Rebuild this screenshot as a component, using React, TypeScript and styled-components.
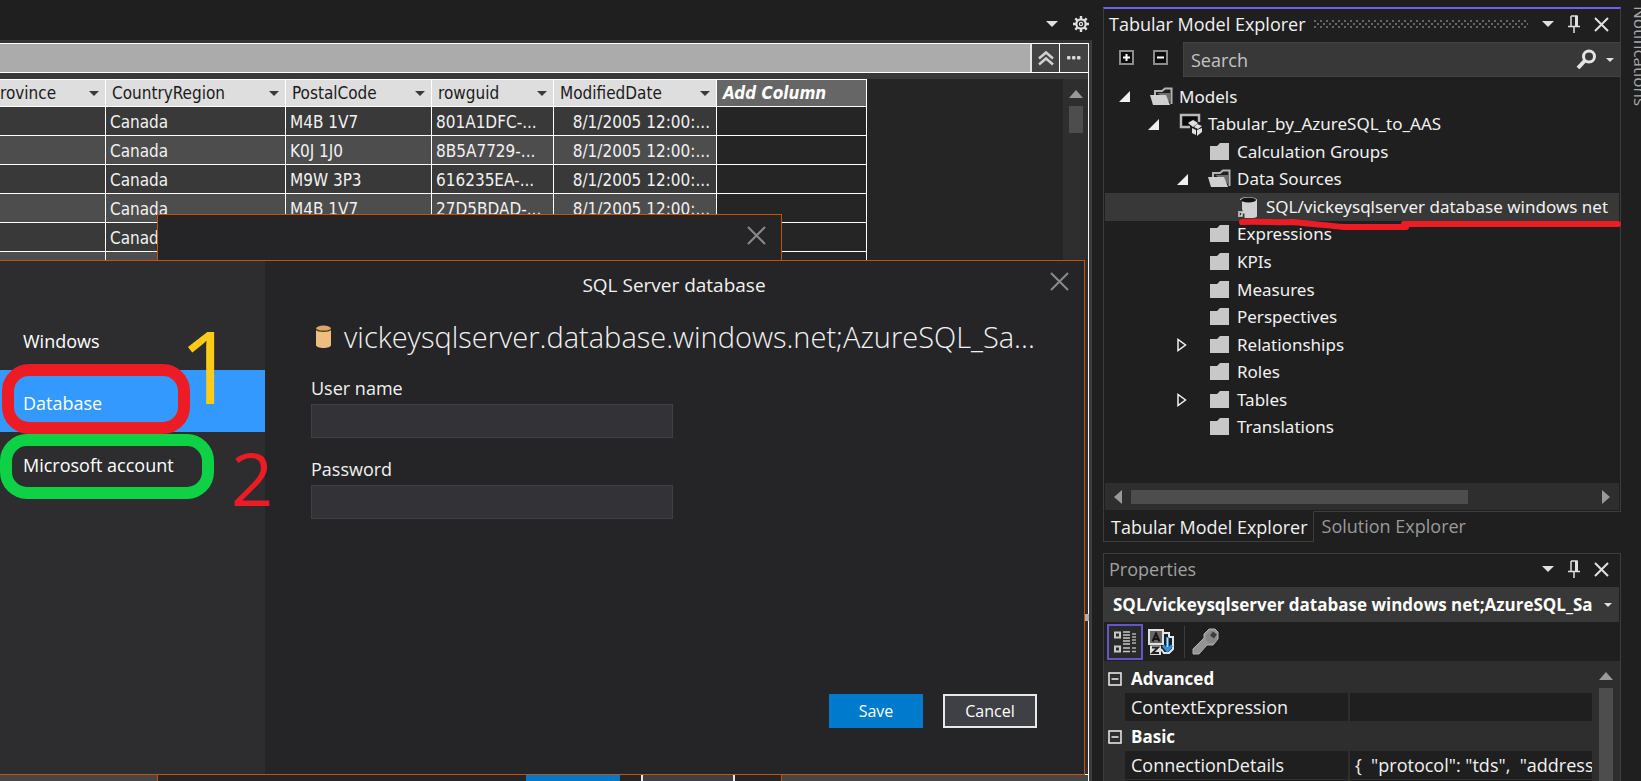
import React from "react";
import styled, { createGlobalStyle, css } from "styled-components";

const ui = `"Open Sans", "Noto Sans", sans-serif`;
const treeFont = `"Noto Sans", "Open Sans", sans-serif`;
const gridFont = `"DejaVu Sans Condensed", "Noto Sans", sans-serif`;

const GlobalStyle = createGlobalStyle`
  *, *::before, *::after { box-sizing: border-box; }
  body { margin: 0; background: #1f1f1f; color: #f1f1f1; font-family: ${ui}; font-size: 17px; line-height: 24px; }
  button, input, select { font: inherit; color: inherit; margin: 0; padding: 0; }
  button { border: 0; background: none; cursor: pointer; }
  svg { display: block; }
`;

const Shell = styled.div`
  display: flex;
  height: 100vh;
  overflow: hidden;
`;

/* ---------- editor ---------- */

const Editor = styled.main`
  flex: 1;
  min-width: 0;
  display: flex;
  flex-direction: column;
  position: relative;
`;

const TabStrip = styled.div`
  height: 40px;
  flex: none;
  display: flex;
  justify-content: flex-end;
  align-items: center;
  gap: 15px;
  padding: 7px 3px 0 0;
`;

const DocumentFrame = styled.div`
  flex: 1;
  min-height: 0;
  display: flex;
  flex-direction: column;
  background: #252525;
  border-top: 3px solid #333;
  border-right: 3px solid #3c3c3c;
`;

const DocumentInner = styled.div`
  flex: 1;
  min-height: 0;
  display: flex;
  flex-direction: column;
  border-right: 1px solid #f4f4f4;
`;

const FormulaBar = styled.div`
  height: 30px;
  flex: none;
  display: flex;
  border-top: 1px solid #fff;
  border-bottom: 1px solid #fff;
`;

const FormulaInput = styled.input`
  flex: 1;
  min-width: 0;
  border: 0;
  border-right: 2px solid #e4e4e4;
  background: #ababab;
  padding: 0 8px;
`;

const FormulaButton = styled.button`
  width: 27px;
  flex: none;
  display: grid;
  place-items: center;
  background: #424242;
  & + & { border-left: 1px solid #fff; width: 29px; }
`;

const GridArea = styled.div`
  flex: 1;
  min-height: 0;
  display: flex;
  justify-content: space-between;
  border-top: 6px solid #383838;
  overflow: hidden;
`;

const DataTable = styled.table`
  align-self: flex-start;
  table-layout: fixed;
  width: 867px;
  border-collapse: separate;
  border-spacing: 0;
  border-top: 1px solid #fff;
  font-family: ${gridFont};
  font-size: 17px;
  line-height: 22px;
`;

const HeadCell = styled.th<{ $first?: boolean; $add?: boolean }>`
  height: 27px;
  padding: 0 6px 0 ${(p) => (p.$first ? 0 : 6)}px;
  background: ${(p) => (p.$add ? "#666" : "#dedede")};
  color: ${(p) => (p.$add ? "#fff" : "#1b1b1b")};
  font-weight: ${(p) => (p.$add ? 700 : 400)};
  font-style: ${(p) => (p.$add ? "italic" : "normal")};
  border-right: 1px solid #fff;
  border-bottom: 1px solid #fff;
  text-align: left;
  white-space: nowrap;
`;

const HeadContent = styled.div`
  display: flex;
  align-items: center;
  justify-content: space-between;
`;

const BodyRow = styled.tr`
  td { background: #393939; }
  &:nth-child(even) td { background: #4d4d4d; }
  td:last-child, &:nth-child(even) td:last-child { background: #252525; }
`;

const Cell = styled.td<{ $right?: boolean }>`
  height: 29px;
  padding: 2px 6px 0 4px;
  border-right: 1px solid #fff;
  border-bottom: 1px solid #fff;
  text-align: ${(p) => (p.$right ? "right" : "left")};
  white-space: nowrap;
  overflow: hidden;
`;

const VScroll = styled.div<{ $width: number }>`
  width: ${(p) => p.$width}px;
  flex: none;
  display: flex;
  flex-direction: column;
  align-items: center;
  gap: 8px;
  padding-top: 11px;
  background: #2e2e2e;
`;

const VThumb = styled.div<{ $fill?: boolean }>`
  width: 14px;
  height: 27px;
  background: #4d4d4d;
  ${(p) => p.$fill && css`flex: 1;`}
`;

const Footer = styled.div`
  height: 7px;
  flex: none;
  background: #464646;
  border-top: 1px solid #fff;
`;

const SplitterNub = styled.div`
  position: absolute;
  right: 3px;
  bottom: 160px;
  width: 5px;
  height: 7px;
  background: #b0b0b0;
`;

/* ---------- dialogs ---------- */

const BackDialog = styled.section`
  position: absolute;
  left: 157px;
  top: 214px;
  bottom: 0;
  width: 625px;
  display: flex;
  flex-direction: column;
  align-items: flex-end;
  justify-content: space-between;
  padding: 11px 15px 0 0;
  background: #252527;
  border: 1px solid #ca5100;
  border-bottom: 0;
`;

const BackActions = styled.div`
  display: flex;
  gap: 21px;
  padding-right: 31px;
  height: 8px;
  overflow: hidden;
`;

const Dialog = styled.section`
  position: absolute;
  left: 0;
  right: 7px;
  top: 260px;
  bottom: 6px;
  display: flex;
  background: #252527;
  border: 1px solid #ca5100;
  border-left: 0;
`;

const DialogNav = styled.nav`
  width: 265px;
  flex: none;
  display: flex;
  flex-direction: column;
  padding-top: 47px;
  background: #2d2d30;
`;

const NavItem = styled.button<{ $active?: boolean }>`
  height: 62px;
  padding: 3px 0 0 23px;
  text-align: left;
  font-size: 18px;
  color: #fff;
  background: ${(p) => (p.$active ? "#3399ff" : "transparent")};
`;

const DialogBody = styled.form`
  flex: 1;
  min-width: 0;
  display: flex;
  flex-direction: column;
  padding: 11px 14px 46px 46px;
`;

const DialogHeader = styled.header`
  display: grid;
  grid-template-columns: 1fr auto 1fr;
  align-items: start;
  margin-right: 1px;
  & > :first-child { grid-column: 2; padding-right: 32px; }
  & > :last-child { justify-self: end; }
`;

const Caption = styled.h1`
  margin: 0;
  font-size: 19px;
  font-weight: 400;
  line-height: 26px;
`;

const ServerLine = styled.div`
  display: flex;
  align-items: center;
  gap: 13px;
  margin: 19px 0;
  padding-left: 5px;
`;

const ServerName = styled.h2`
  margin: 0;
  font-size: 29px;
  font-weight: 300;
  line-height: 40px;
  white-space: nowrap;
`;

const Label = styled.label`
  height: 24px;
  margin-bottom: 4px;
  font-size: 18px;
`;

const TextField = styled.input`
  width: 362px;
  height: 34px;
  margin-bottom: 19px;
  padding: 0 8px;
  background: #333337;
  border: 1px solid #3f3f46;
`;

const Actions = styled.div`
  display: flex;
  justify-content: flex-end;
  gap: 20px;
  margin-top: auto;
  padding-right: 33px;
`;

const ActionButton = styled.button<{ $primary?: boolean }>`
  width: 94px;
  height: 34px;
  font-size: 16px;
  color: #fff;
  background: ${(p) => (p.$primary ? "#007acc" : "#3f3f46")};
  ${(p) => !p.$primary && css`border: 2px solid #e8e8e8;`}
`;

const MarkerRing = styled.div<{ $x: number; $y: number; $w: number; $h: number; $color: string }>`
  position: absolute;
  left: ${(p) => p.$x}px;
  top: ${(p) => p.$y}px;
  width: ${(p) => p.$w}px;
  height: ${(p) => p.$h}px;
  border: 12px solid ${(p) => p.$color};
  border-radius: 27px;
  pointer-events: none;
`;

const MarkerDigit = styled.span<{ $x: number; $y: number; $size: number; $color: string }>`
  position: absolute;
  left: ${(p) => p.$x}px;
  top: ${(p) => p.$y}px;
  font-size: ${(p) => p.$size}px;
  line-height: 1;
  color: ${(p) => p.$color};
  pointer-events: none;
`;

/* ---------- dock ---------- */

const Dock = styled.aside`
  width: 518px;
  flex: none;
  display: flex;
  flex-direction: column;
  margin-left: 11px;
  padding-top: 7px;
`;

const ToolPanel = styled.section<{ $active?: boolean; $fill?: boolean }>`
  display: flex;
  flex-direction: column;
  position: relative;
  border: 1px solid #3d3d3d;
  ${(p) => p.$active && css`border-top: 2px solid #7160e8;`}
  ${(p) => p.$fill && css`flex: 1; min-height: 0; border-bottom: 0;`}
`;

const PanelHeader = styled.header`
  height: 33px;
  flex: none;
  display: flex;
  align-items: center;
  padding: 0 11px 3px 5px;
`;

const PanelTitle = styled.h2<{ $dim?: boolean }>`
  margin: 0 auto 0 0;
  font-size: 18px;
  font-weight: 400;
  line-height: 24px;
  white-space: nowrap;
  color: ${(p) => (p.$dim ? "#a0a0a0" : "#f1f1f1")};
`;

const Grip = styled.div`
  flex: 1;
  height: 8px;
  margin: 0 14px 0 8px;
  background:
    radial-gradient(circle at 1px 1px, #666 1px, transparent 1px) 0 0 / 6px 6px,
    radial-gradient(circle at 1px 1px, #666 1px, transparent 1px) 3px 3px / 6px 6px;
`;

const PanelControls = styled.div`
  display: flex;
  align-items: center;
  gap: 14px;
`;

const SearchRow = styled.div`
  height: 35px;
  flex: none;
  display: flex;
`;

const SearchTools = styled.div`
  width: 79px;
  display: flex;
  align-items: center;
  gap: 19px;
  padding: 0 0 4px 15px;
`;

const SearchBox = styled.label`
  flex: 1;
  min-width: 0;
  display: flex;
  align-items: center;
  gap: 9px;
  padding: 0 6px 0 7px;
  background: #383838;
  border: 1px solid #424242;
  border-right: 0;
`;

const SearchInput = styled.input`
  flex: 1;
  min-width: 0;
  border: 0;
  background: none;
  font-size: 18px;
  &::placeholder { color: #c4c4c4; opacity: 1; }
`;

const Tree = styled.ul`
  list-style: none;
  margin: 6px 1px 0;
  padding: 0;
  height: 358px;
  display: grid;
  grid-auto-rows: 1fr;
`;

const TreeItem = styled.li<{ $level: number; $selected?: boolean }>`
  display: flex;
  align-items: center;
  min-height: 0;
  min-width: 0;
  padding-left: ${(p) => 11 + p.$level * 29}px;
  font-family: ${treeFont};
  font-size: 17px;
  white-space: nowrap;
  overflow: hidden;
  background: ${(p) => (p.$selected ? "#383838" : "transparent")};
`;

const Toggle = styled.button`
  width: 16px;
  height: 16px;
  flex: none;
  display: grid;
  place-items: center;
`;

const Twisty = styled.span`
  width: 16px;
  flex: none;
`;

const NodeIcon = styled.span`
  width: 24px;
  flex: none;
  margin: 0 5px 0 18px;
`;

const HScroll = styled.div`
  height: 27px;
  flex: none;
  display: flex;
  align-items: center;
  gap: 9px;
  margin: 42px 1px 1px;
  padding: 0 9px;
  background: #2e2e2e;
`;

const HTrack = styled.div`
  flex: 1;
  height: 14px;
`;

const HThumb = styled.div`
  width: 73%;
  height: 14px;
  background: #4d4d4d;
`;

const DockTabs = styled.div`
  display: flex;
  height: 30px;
  flex: none;
  margin-bottom: 11px;
`;

const DockTab = styled.button<{ $active?: boolean }>`
  padding: 0 8px 2px;
  font-size: 18px;
  color: ${(p) => (p.$active ? "#f1f1f1" : "#9a9a9a")};
  white-space: nowrap;
  position: relative;
  ${(p) =>
    p.$active &&
    css`
      padding: 0 5px 0 7px;
      margin-top: -1px;
      background: #1f1f1f;
      border: 1px solid #3d3d3d;
      border-top-color: #1f1f1f;
    `}
`;

const ObjectPicker = styled.div`
  height: 35px;
  flex: none;
  display: flex;
  align-items: center;
  margin-right: 1px;
  padding-right: 7px;
  background: #383838;
`;

const ObjectSelect = styled.select`
  flex: 1;
  min-width: 0;
  height: 34px;
  margin-right: 11px;
  padding-left: 9px;
  appearance: none;
  border: 0;
  background: none;
  font-size: 17px;
  font-weight: 700;
  color: #fff;
  text-overflow: clip;
`;

const PropertyToolbar = styled.div`
  height: 39px;
  flex: none;
  display: flex;
  align-items: center;
  padding-left: 3px;
`;

const ViewButton = styled.button<{ $active?: boolean }>`
  width: 36px;
  height: 36px;
  display: grid;
  place-items: center;
  border: ${(p) => (p.$active ? "2px solid #6456c8" : "0")};
  background: ${(p) => (p.$active ? "#2a2a2a" : "transparent")};
`;

const Separator = styled.span`
  width: 1px;
  height: 32px;
  margin: 0 2px 0 5px;
  background: #3d3d3d;
`;

const PropertyArea = styled.div`
  flex: 1;
  min-height: 0;
  display: flex;
  overflow: hidden;
  background: #2e2e2e;
`;

const PropertyTable = styled.table`
  flex: 1;
  min-width: 0;
  align-self: flex-start;
  display: table;
  width: 100%;
  table-layout: fixed;
  border-collapse: separate;
  border-spacing: 0;
  margin-top: 3px;
  font-size: 18px;
`;

const Category = styled.th`
  height: 29px;
  padding: 0 0 0 4px;
  text-align: left;
  font-size: 17px;
  font-weight: 700;
  color: #fff;
`;

const CategoryContent = styled.div`
  display: flex;
  align-items: center;
  gap: 9px;
`;

const Gutter = styled.td`
  background: #2e2e2e;
`;

const PropCell = styled.td<{ $value?: boolean }>`
  height: 29px;
  padding: 0 0 0 ${(p) => (p.$value ? 5 : 6)}px;
  background: #1f1f1f;
  border-bottom: 1px solid #2e2e2e;
  border-left: ${(p) => (p.$value ? "2px solid #2e2e2e" : "0")};
  white-space: pre;
  overflow: hidden;
`;

const AutoHide = styled.aside`
  width: 20px;
  flex: none;
  padding: 6px 0 0 7px;
  overflow: hidden;
`;

const AutoHideTab = styled.button`
  writing-mode: vertical-rl;
  font-size: 17px;
  line-height: 24px;
  color: #a8a8a8;
  white-space: nowrap;
`;

/* ---------- icons ---------- */

const Caret = ({ w = 12, color = "#e0e0e0" }: { w?: number; color?: string }) => (
  <svg width={w} height={w / 2} viewBox="0 0 12 6"><path d="M0 0h12L6 6z" fill={color} /></svg>
);
const UpArrow = () => (
  <svg width="14" height="8" viewBox="0 0 14 8"><path d="M0 8h14L7 0z" fill="#999" /></svg>
);
const SideArrow = ({ right }: { right?: boolean }) => (
  <svg width="8" height="14" viewBox="0 0 8 14"><path d={right ? "M0 0v14l8-7z" : "M8 0v14L0 7z"} fill="#999" /></svg>
);
const Gear = () => (
  <svg width="16" height="16" viewBox="0 0 16 16" fill="none" stroke="#e0e0e0">
    <circle cx="8" cy="8" r="4.7" strokeWidth="2.2" />
    <circle cx="8" cy="8" r="1.6" strokeWidth="1.2" />
    <path d="M8 0v3M8 13v3M0 8h3M13 8h3M2.3 2.3l2 2M11.7 11.7l2 2M13.7 2.3l-2 2M4.3 11.7l-2 2" strokeWidth="2.4" />
  </svg>
);
const Cross = ({ size = 15, color = "#e0e0e0", width = 2 }: { size?: number; color?: string; width?: number }) => (
  <svg width={size} height={size} viewBox={`0 0 ${size} ${size}`}>
    <path d={`M1 1L${size - 1} ${size - 1}M${size - 1} 1L1 ${size - 1}`} stroke={color} strokeWidth={width} />
  </svg>
);
const Pin = () => (
  <svg width="12" height="18" viewBox="0 0 12 18" fill="none" stroke="#e0e0e0">
    <path d="M3 1h6v10M3 1v10M0 11.500h12M6 12v6" strokeWidth="1.500" />
    <path d="M8.500 1v10" strokeWidth="3" />
  </svg>
);
const ChevronsUp = () => (
  <svg width="16" height="16" viewBox="0 0 16 16" fill="none" stroke="#d0d0d0" strokeWidth="2.500">
    <path d="M1 8.500l7-6 7 6M1 14.500l7-6 7 6" />
  </svg>
);
const Dots = () => (
  <svg width="14" height="4" viewBox="0 0 14 4" fill="#d8d8d8">
    <rect width="3.500" height="3.500" rx="1" /><rect x="5" width="3.500" height="3.500" rx="1" /><rect x="10" width="3.500" height="3.500" rx="1" />
  </svg>
);
const BoxSign = ({ plus }: { plus?: boolean }) => (
  <svg width="15" height="15" viewBox="0 0 15 15" fill="#0c0c0c">
    <rect x="1" y="1" width="13" height="13" stroke="#8c8c8c" strokeWidth="2" />
    <path d={plus ? "M4 7.500h7M7.500 4v7" : "M4 7.500h7"} stroke="#fff" strokeWidth="2" />
  </svg>
);
const CategoryBox = () => (
  <svg width="14" height="14" viewBox="0 0 14 14" fill="none" stroke="#f1f1f1">
    <rect x="1" y="1" width="12" height="12" strokeWidth="1.500" /><path d="M3.500 7h7" strokeWidth="1.500" />
  </svg>
);
const Magnifier = () => (
  <svg width="21" height="21" viewBox="0 0 21 21" fill="none" stroke="#e4e4e4">
    <circle cx="13" cy="7.500" r="5.500" strokeWidth="3" /><path d="M9 11.500L2 19" strokeWidth="4" />
  </svg>
);
const Expanded = () => (
  <svg width="11" height="11" viewBox="0 0 11 11"><path d="M11 0v11H0z" fill="#f0f0f0" /></svg>
);
const Collapsed = () => (
  <svg width="10" height="14" viewBox="0 0 10 14"><path d="M1 1.500v11L8.500 7z" fill="none" stroke="#f0f0f0" strokeWidth="1.500" /></svg>
);
const FolderIcon = () => (
  <svg width="24" height="20" viewBox="0 0 24 20"><path d="M2 4h7l3-3h9v17H2z" fill="#c8c8c8" /></svg>
);
const FolderOpenIcon = () => (
  <svg width="24" height="20" viewBox="0 0 24 20">
    <path d="M5 8V4h7l3-2.500h6.500V17" fill="none" stroke="#b4b4b4" strokeWidth="2" />
    <path d="M7 6h13v9z" fill="#6e6e6e" />
    <path d="M0 8h16l4 10H3z" fill="#d0d0d0" />
  </svg>
);
const ModelIcon = () => (
  <svg width="24" height="24" viewBox="0 0 24 24">
    <path d="M11 15H2V3h18v7" fill="#080808" stroke="#b8b8b8" strokeWidth="2.500" />
    <path d="M9 10l6-3 8 5-1 5-7 6-2-8z" fill="#1f1f1f" />
    <path d="M9 11l5-3 5 3-5 4z M18 12l5 2-4 3-4-2z M13 16l4 2v5l-4-2z M23 16v4l-5 4v-6z" fill="#e0e0e0" />
  </svg>
);
const DatabaseIcon = () => (
  <svg width="24" height="24" viewBox="0 0 24 24">
    <path d="M3 5c0-2 4-3 8-3s9 1 9 3v16c0 2-4 2-8 2s-7 0-7-2V5z" fill="#d0d0d0" />
    <ellipse cx="11.500" cy="5" rx="7.500" ry="2.500" fill="#141414" />
    <path d="M0 16h4v2H2v2h4v3H1" fill="none" stroke="#383838" strokeWidth="3" />
    <path d="M1 21h4v-4H1M1 19h2" fill="none" stroke="#d8d8d8" strokeWidth="1.500" />
  </svg>
);
const CylinderIcon = () => (
  <svg width="15" height="24" viewBox="0 0 15 24">
    <path d="M0 5h15v15c0 4-15 4-15 0z" fill="#eebd80" />
    <ellipse cx="7.500" cy="3.500" rx="7.500" ry="3" fill="#dba766" />
    <path d="M0 4c1 3 14 3 15 0" fill="none" stroke="#5a3f20" strokeWidth="1.500" />
  </svg>
);
const CategorizedIcon = () => (
  <svg width="22" height="22" viewBox="0 0 22 22" fill="none">
    <path d="M1 1.500h5v5H1zM1 15.500h5v5H1z" stroke="#c8c8c8" strokeWidth="2" />
    <path d="M9 1h7M9 4h7M9 7h7M9 10h7M9 13h7M9 17h7M9 20.500h7" stroke="#c8c8c8" strokeWidth="1.500" />
    <path d="M18 3h4M18 6h4M18 9h4M18 12h4M18 17h4M18 20.500h4" stroke="#b0b0b0" strokeWidth="1.500" />
  </svg>
);
const SortIcon = () => (
  <svg width="26" height="26" viewBox="0 0 26 26" fill="none">
    <path d="M1 1h14v14H1z" fill="#666" stroke="#e0e0e0" strokeWidth="2" />
    <path d="M4.500 12.500L8 4.500l3.500 8M6 10h4" stroke="#161616" strokeWidth="2" />
    <path d="M2 16.500h11V26H2z" fill="#e0e0e0" />
    <path d="M4 18.500h6L4.500 24H11" stroke="#222" strokeWidth="2" />
    <path d="M16 4h5v4h4v12l-4 4h-5l-3-4" stroke="#e8e8e8" strokeWidth="2" />
    <path d="M19.500 8v13M15 16.500l4.500 5 4.500-5" stroke="#2f8fe0" strokeWidth="3" />
    <path d="M19.500 9v9" stroke="#b8e0ff" />
  </svg>
);
const WrenchIcon = () => (
  <svg width="27" height="27" viewBox="0 0 27 27">
    <path d="M1 21l11-11V6l5-5h6l3 3v7l-5 6h-6L7 26H1z" fill="#949494" stroke="#b0b0b0" strokeWidth="1" />
    <path d="M14 7l4-4h4l-3 4 3 4 3-2v3l-4 3h-4l-3-3z" fill="#868686" />
    <path d="M20 9l3-4" stroke="#3c3c3c" strokeWidth="5" />
  </svg>
);

/* ---------- data ---------- */

const columns = ["rovince", "CountryRegion", "PostalCode", "rowguid", "ModifiedDate"];
const widths = [106, 180, 146, 122, 163, 150];
const stamp = "8/1/2005 12:00:...";
const rows = [
  ["", "Canada", "M4B 1V7", "801A1DFC-..."],
  ["", "Canada", "K0J 1J0", "8B5A7729-..."],
  ["", "Canada", "M9W 3P3", "616235EA-..."],
  ["", "Canada", "M4B 1V7", "27D5BDAD-..."],
  ["", "Canada", "", ""],
  ["", "", "", ""],
];

type Node = { label: string; level: number; icon: React.ReactNode; state?: "open" | "closed"; selected?: boolean };
const nodes: Node[] = [
  { label: "Models", level: 0, icon: <FolderOpenIcon />, state: "open" },
  { label: "Tabular_by_AzureSQL_to_AAS", level: 1, icon: <ModelIcon />, state: "open" },
  { label: "Calculation Groups", level: 2, icon: <FolderIcon /> },
  { label: "Data Sources", level: 2, icon: <FolderOpenIcon />, state: "open" },
  { label: "SQL/vickeysqlserver database windows net", level: 3, icon: <DatabaseIcon />, selected: true },
  { label: "Expressions", level: 2, icon: <FolderIcon /> },
  { label: "KPIs", level: 2, icon: <FolderIcon /> },
  { label: "Measures", level: 2, icon: <FolderIcon /> },
  { label: "Perspectives", level: 2, icon: <FolderIcon /> },
  { label: "Relationships", level: 2, icon: <FolderIcon />, state: "closed" },
  { label: "Roles", level: 2, icon: <FolderIcon /> },
  { label: "Tables", level: 2, icon: <FolderIcon />, state: "closed" },
  { label: "Translations", level: 2, icon: <FolderIcon /> },
];

const Underline = styled.svg`
  position: absolute;
  right: -3px;
  top: 207px;
`;

const HeaderButtons = () => (
  <PanelControls>
    <button type="button" aria-label="Window position"><Caret /></button>
    <button type="button" aria-label="Auto hide"><Pin /></button>
    <button type="button" aria-label="Close"><Cross /></button>
  </PanelControls>
);

const PropertyRow = ({ name, value }: { name: string; value: string }) => (
  <tr>
    <Gutter />
    <PropCell>{name}</PropCell>
    <PropCell $value>{value}</PropCell>
  </tr>
);

const CategoryRow = ({ name }: { name: string }) => (
  <tr>
    <Category colSpan={3} scope="rowgroup">
      <CategoryContent><CategoryBox />{name}</CategoryContent>
    </Category>
  </tr>
);

export default function App() {
  return (
    <Shell>
      <GlobalStyle />
      <Editor>
        <TabStrip>
          <button type="button" aria-label="Open documents"><Caret /></button>
          <button type="button" aria-label="Settings"><Gear /></button>
        </TabStrip>
        <DocumentFrame>
          <DocumentInner>
            <FormulaBar>
              <FormulaInput aria-label="Formula" />
              <FormulaButton type="button" aria-label="Collapse"><ChevronsUp /></FormulaButton>
              <FormulaButton type="button" aria-label="More"><Dots /></FormulaButton>
            </FormulaBar>
            <GridArea>
              <DataTable>
                <colgroup>{widths.map((w, i) => <col key={i} width={w} />)}</colgroup>
                <thead>
                  <tr>
                    {columns.map((c, i) => (
                      <HeadCell key={c} scope="col" $first={i === 0}>
                        <HeadContent>
                          {c}
                          <button type="button" aria-label={`Filter ${c}`}><Caret w={10} color="#3a3a3a" /></button>
                        </HeadContent>
                      </HeadCell>
                    ))}
                    <HeadCell scope="col" $add>Add Column</HeadCell>
                  </tr>
                </thead>
                <tbody>
                  {rows.map((r, i) => (
                    <BodyRow key={i}>
                      {r.map((v, j) => <Cell key={j}>{v}</Cell>)}
                      <Cell $right>{i < 4 ? stamp : ""}</Cell>
                      <Cell />
                    </BodyRow>
                  ))}
                </tbody>
              </DataTable>
              <VScroll $width={25}><UpArrow /><VThumb /></VScroll>
            </GridArea>
            <Footer />
          </DocumentInner>
        </DocumentFrame>
        <SplitterNub />

        <BackDialog aria-label="Connection">
          <button type="button" aria-label="Close"><Cross size={19} color="#8a8a8a" width={2} /></button>
          <BackActions>
            <ActionButton as="div" $primary />
            <ActionButton as="div" />
          </BackActions>
        </BackDialog>

        <Dialog role="dialog" aria-label="SQL Server database">
          <DialogNav>
            <NavItem type="button">Windows</NavItem>
            <NavItem type="button" $active>Database</NavItem>
            <NavItem type="button">Microsoft account</NavItem>
          </DialogNav>
          <DialogBody onSubmit={(e) => e.preventDefault()}>
            <DialogHeader>
              <Caption>SQL Server database</Caption>
              <button type="button" aria-label="Close"><Cross size={19} color="#8a8a8a" width={2} /></button>
            </DialogHeader>
            <ServerLine>
              <CylinderIcon />
              <ServerName>vickeysqlserver.database.windows.net;AzureSQL_Sa...</ServerName>
            </ServerLine>
            <Label htmlFor="user">User name</Label>
            <TextField id="user" type="text" />
            <Label htmlFor="password">Password</Label>
            <TextField id="password" type="password" />
            <Actions>
              <ActionButton type="submit" $primary>Save</ActionButton>
              <ActionButton type="button">Cancel</ActionButton>
            </Actions>
          </DialogBody>
          <MarkerRing $x={2} $y={103} $w={188} $h={70} $color="#ed1c24" />
          <MarkerRing $x={0} $y={173} $w={214} $h={65} $color="#0ed145" />
          <MarkerDigit $x={179} $y={54} $size={100} $color="#ffca18">1</MarkerDigit>
          <MarkerDigit $x={231} $y={180} $size={74} $color="#ed1c24">2</MarkerDigit>
        </Dialog>
      </Editor>

      <Dock>
        <ToolPanel $active>
          <PanelHeader>
            <PanelTitle>Tabular Model Explorer</PanelTitle>
            <Grip />
            <HeaderButtons />
          </PanelHeader>
          <SearchRow>
            <SearchTools>
              <button type="button" aria-label="Expand all"><BoxSign plus /></button>
              <button type="button" aria-label="Collapse all"><BoxSign /></button>
            </SearchTools>
            <SearchBox>
              <SearchInput type="text" placeholder="Search" aria-label="Search" />
              <Magnifier />
              <Caret w={8} />
            </SearchBox>
          </SearchRow>
          <Tree>
            {nodes.map((n) => (
              <TreeItem key={n.label} $level={n.level} $selected={n.selected}>
                {n.state ? (
                  <Toggle type="button" aria-label={`Toggle ${n.label}`}>
                    {n.state === "open" ? <Expanded /> : <Collapsed />}
                  </Toggle>
                ) : (
                  <Twisty />
                )}
                <NodeIcon>{n.icon}</NodeIcon>
                {n.label}
              </TreeItem>
            ))}
          </Tree>
          <HScroll>
            <SideArrow />
            <HTrack><HThumb /></HTrack>
            <SideArrow right />
          </HScroll>
          <Underline width="386" height="16" viewBox="0 0 386 16" fill="none" stroke="#ed1c24" strokeWidth="6" strokeLinecap="round" strokeLinejoin="round">
            <path d="M5 6c18-1 34 1 50 0c18 2 32 3 52 5h62M167 8h214" />
          </Underline>
        </ToolPanel>
        <DockTabs>
          <DockTab type="button" $active>Tabular Model Explorer</DockTab>
          <DockTab type="button">Solution Explorer</DockTab>
        </DockTabs>

        <ToolPanel $fill>
          <PanelHeader>
            <PanelTitle $dim>Properties</PanelTitle>
            <HeaderButtons />
          </PanelHeader>
          <ObjectPicker>
            <ObjectSelect aria-label="Selected object">
              <option>SQL/vickeysqlserver database windows net;AzureSQL_SampleDB</option>
            </ObjectSelect>
            <Caret w={8} />
          </ObjectPicker>
          <PropertyToolbar>
            <ViewButton type="button" aria-label="Categorized" $active><CategorizedIcon /></ViewButton>
            <ViewButton type="button" aria-label="Alphabetical"><SortIcon /></ViewButton>
            <Separator />
            <ViewButton type="button" aria-label="Property pages"><WrenchIcon /></ViewButton>
          </PropertyToolbar>
          <PropertyArea>
            <PropertyTable>
              <colgroup><col width="21" /><col width="223" /><col /></colgroup>
              <tbody>
                <CategoryRow name="Advanced" />
                <PropertyRow name="ContextExpression" value="" />
                <CategoryRow name="Basic" />
                <PropertyRow name="ConnectionDetails" value={'{  "protocol": "tds",  "address": {'} />
                <PropertyRow name="" value="" />
              </tbody>
            </PropertyTable>
            <VScroll $width={28}><UpArrow /><VThumb $fill /></VScroll>
          </PropertyArea>
        </ToolPanel>
      </Dock>

      <AutoHide>
        <AutoHideTab type="button">Notifications</AutoHideTab>
      </AutoHide>
    </Shell>
  );
}
